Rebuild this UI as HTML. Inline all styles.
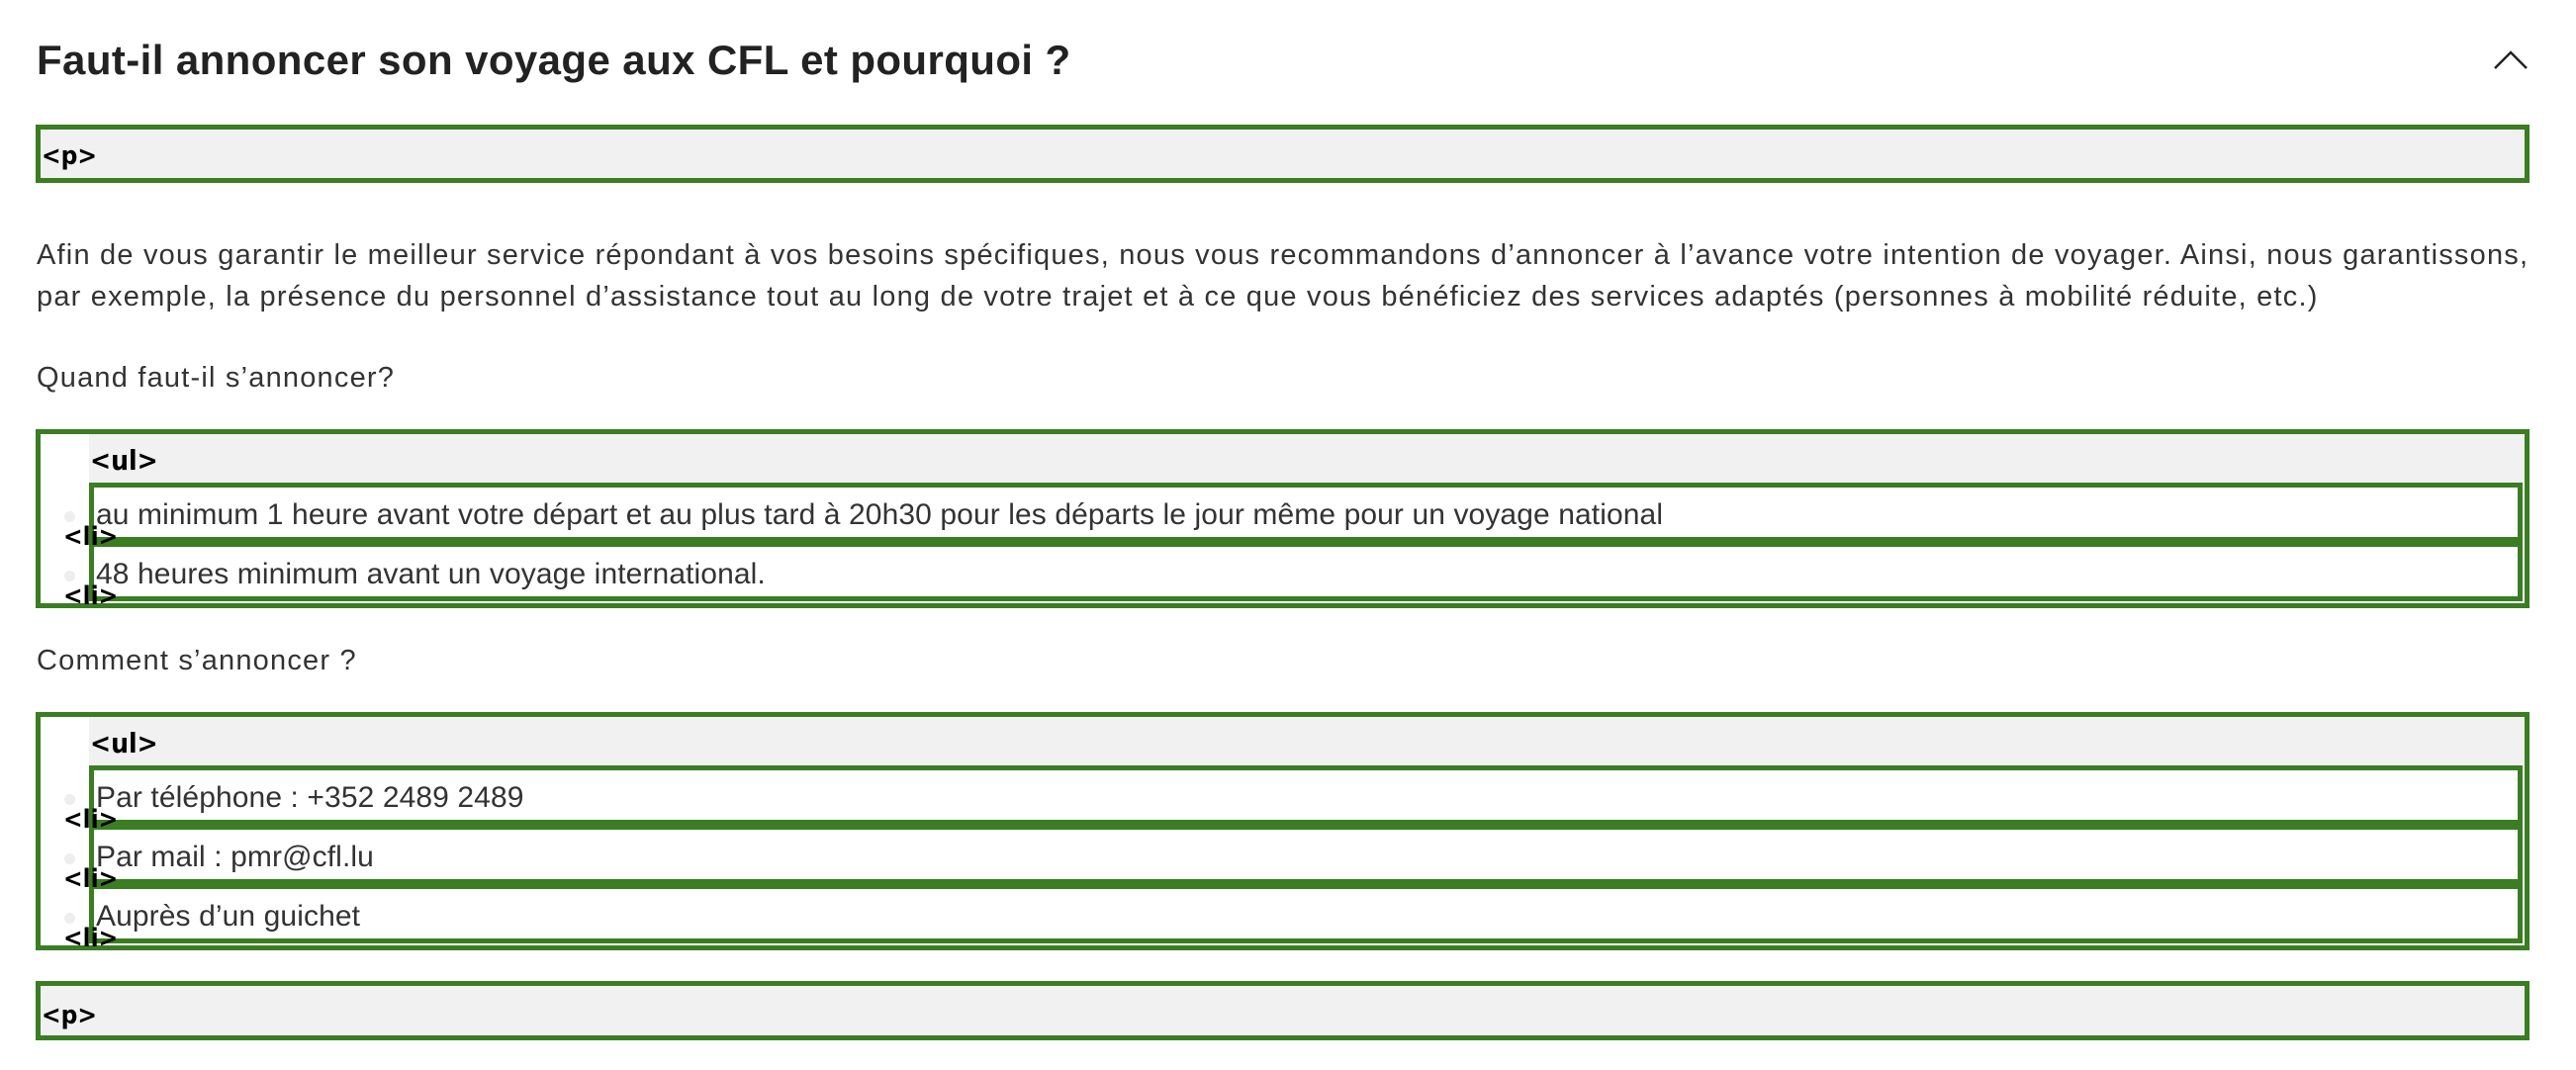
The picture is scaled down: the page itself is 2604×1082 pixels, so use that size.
<!DOCTYPE html>
<html><head><meta charset="utf-8"><style>
*{margin:0;padding:0;box-sizing:border-box}
body{width:2604px;height:1082px;background:#fff;position:relative;overflow:hidden;font-family:"Liberation Sans",sans-serif}
.a{position:absolute;white-space:nowrap;line-height:1}
.box{position:absolute;border:5px solid #3a7d23}
.gray{background:#f1f1f1}
.lbl{position:absolute;font-weight:bold;font-size:26px;color:#000;line-height:1;font-family:"DejaVu Sans Condensed","Liberation Sans",sans-serif}
.t{font-size:29px;color:#333;letter-spacing:1.2px}
.li{font-size:30px;color:#333;font-weight:300;letter-spacing:0.1px}
.bul{position:absolute;width:11px;height:11px;border-radius:50%;background:#eee}
</style></head><body>
<div class="a" style="left:37px;top:40px;font-size:42px;font-weight:bold;color:#222;letter-spacing:0.4px">Faut-il annoncer son voyage aux CFL et pourquoi ?</div>
<svg style="position:absolute;left:2515px;top:45px" width="45" height="30"><polyline points="7,24 23,8 39,24" fill="none" stroke="#222" stroke-width="2.5"/></svg>

<div class="box gray" style="left:36px;top:126px;width:2521px;height:59px"></div>
<div class="lbl" style="left:42px;top:145px">&lt;p&gt;</div>

<div class="a t" style="left:37px;line-height:42px;top:237px;width:2560px">Afin de vous garantir le meilleur service répondant à vos besoins spécifiques, nous vous recommandons d’annoncer à l’avance votre intention de voyager. Ainsi, nous garantissons,<br>par exemple, la présence du personnel d’assistance tout au long de votre trajet et à ce que vous bénéficiez des services adaptés (personnes à mobilité réduite, etc.)</div>
<div class="a t" style="left:37px;top:368px">Quand faut-il s’annoncer?</div>

<div class="box" style="left:36px;top:434px;width:2521px;height:181px"></div>
<div class="gray" style="position:absolute;left:90px;top:439px;width:2462px;height:49px"></div>
<div class="lbl" style="left:91px;top:452px;font-size:28px">&lt;ul&gt;</div>
<div class="box" style="left:90px;top:488px;width:2460px;height:60px"></div>
<div class="box" style="left:90px;top:548px;width:2460px;height:60px"></div>
<div class="bul" style="left:65px;top:517px"></div>
<div class="bul" style="left:65px;top:577px"></div>
<div class="a li" style="left:97px;top:506px">au minimum 1 heure avant votre départ et au plus tard à 20h30 pour les départs le jour même pour un voyage national</div>
<div class="a li" style="left:97px;top:566px">48 heures minimum avant un voyage international.</div>
<div class="lbl" style="left:64px;top:530px">&lt;li&gt;</div>
<div class="lbl" style="left:64px;top:590px">&lt;li&gt;</div>

<div class="a t" style="left:37px;top:654px">Comment s’annoncer ?</div>

<div class="box" style="left:36px;top:720px;width:2521px;height:241px"></div>
<div class="gray" style="position:absolute;left:90px;top:725px;width:2462px;height:49px"></div>
<div class="lbl" style="left:91px;top:738px;font-size:28px">&lt;ul&gt;</div>
<div class="box" style="left:90px;top:774px;width:2460px;height:60px"></div>
<div class="box" style="left:90px;top:834px;width:2460px;height:60px"></div>
<div class="box" style="left:90px;top:894px;width:2460px;height:60px"></div>
<div class="bul" style="left:65px;top:803px"></div>
<div class="bul" style="left:65px;top:863px"></div>
<div class="bul" style="left:65px;top:923px"></div>
<div class="a li" style="left:97px;top:792px">Par téléphone : +352 2489 2489</div>
<div class="a li" style="left:97px;top:852px">Par mail : pmr@cfl.lu</div>
<div class="a li" style="left:97px;top:912px">Auprès d’un guichet</div>
<div class="lbl" style="left:64px;top:816px">&lt;li&gt;</div>
<div class="lbl" style="left:64px;top:876px">&lt;li&gt;</div>
<div class="lbl" style="left:64px;top:936px">&lt;li&gt;</div>

<div class="box gray" style="left:36px;top:992px;width:2521px;height:60px"></div>
<div class="lbl" style="left:42px;top:1014px">&lt;p&gt;</div>
</body></html>
